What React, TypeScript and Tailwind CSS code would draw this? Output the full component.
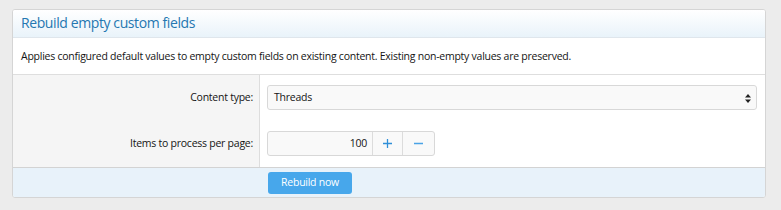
import React from 'react';

const font = { fontFamily: '"Open Sans", "Noto Sans", sans-serif' };

export default function App() {
    return (
        <div className="min-h-[210px] w-[781px] bg-[#ececec] pt-[9px] pl-[12px]" style={font}>
            <div className="w-[754px] overflow-hidden rounded-[3px] border border-[#d5d5d5] bg-white">
                {/* Header */}
                <div className="h-[28px] border-b border-[#dfe6ec] bg-gradient-to-b from-[#ffffff] to-[#e9f3fa] pl-[8px] pt-[3px]">
                    <h2 className="text-[14px] leading-[20px] tracking-[-0.4px] text-[#2577b1]">Rebuild empty custom fields</h2>
                </div>

                {/* Description */}
                <div className="h-[37px] border-b border-[#dedede] pl-[8px] pt-[10px] text-[10.5px] leading-[16px] tracking-[-0.25px] text-[#141414]">
                    Applies configured default values to empty custom fields on existing content. Existing non-empty values are preserved.
                </div>

                {/* Form rows */}
                <div className="flex text-[10.5px] tracking-[-0.25px] text-[#141414]">
                    <div className="w-[247px] border-r border-[#dddddd] bg-[#f5f5f5] pt-[10px] pb-[11px]">
                        <div className="flex h-[25px] items-center justify-end pr-[6px]">Content type:</div>
                        <div className="mt-[21px] flex h-[25px] items-center justify-end pr-[6px]">Items to process per page:</div>
                    </div>
                    <div className="flex-1 px-[7px] pt-[10px] pb-[11px]">
                        <div className="relative flex h-[25px] w-[490px] items-center rounded-[3px] border border-[#d8d8d8] bg-[#f9f9f9] pl-[6px]">
                            Threads
                            <svg className="absolute right-[5px] top-[8px]" width="6" height="9" viewBox="0 0 6 9">
                                <path d="M3 0 L6 3.5 L0 3.5 Z" fill="#222" />
                                <path d="M0 5.5 L6 5.5 L3 9 Z" fill="#222" />
                            </svg>
                        </div>
                        <div className="mt-[21px] flex h-[25px] w-[168px] rounded-[3px] border border-[#d8d8d8] bg-[#f9f9f9]">
                            <div className="flex flex-1 items-center justify-end pr-[5px]">100</div>
                            <div className="flex w-[30px] items-center justify-center border-l border-[#dcdcdc]">
                                <svg width="9" height="9" viewBox="0 0 9 9">
                                    <path d="M4.5 0 V9 M0 4.5 H9" stroke="#2f8fd8" strokeWidth="1.3" />
                                </svg>
                            </div>
                            <div className="flex w-[32px] items-center justify-center border-l border-[#dcdcdc]">
                                <svg width="9" height="9" viewBox="0 0 9 9">
                                    <path d="M0 4.5 H9" stroke="#4aa3e6" strokeWidth="1.5" />
                                </svg>
                            </div>
                        </div>
                    </div>
                </div>

                {/* Footer */}
                <div className="flex h-[30px] items-center border-t border-[#d3d3d3] bg-[#e8f2fa] pl-[255px]">
                    <button className="h-[22px] w-[84px] rounded-[3px] bg-[#47a7eb] text-[10.5px] tracking-[-0.25px] text-white">
                        Rebuild now
                    </button>
                </div>
            </div>
        </div>
    );
}
